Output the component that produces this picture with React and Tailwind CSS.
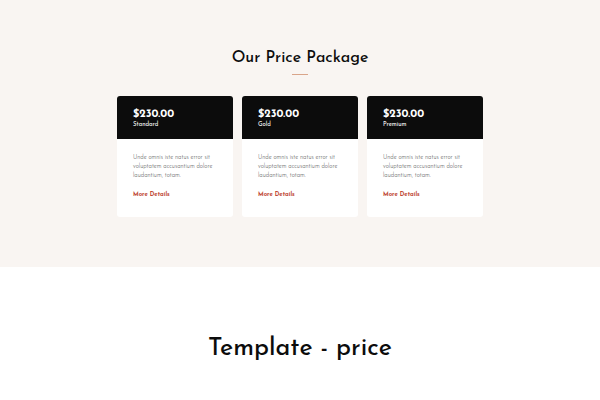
const plans = ["Standard", "Gold", "Premium"];

function PriceCard({ name }) {
  return (
    <article className="flex-1 overflow-hidden rounded-[3px] bg-white">
      <header className="bg-[#0c0c0c] px-4 pt-3 pb-2.5 text-white">
        <p className="text-[11px] leading-[13px] font-bold">$230.00</p>
        <h2 className="text-[6px] leading-2">{name}</h2>
      </header>
      <div className="px-4 pt-3.5 pb-[18px]">
        <p className="text-[6px] leading-[9px] font-light whitespace-nowrap text-[#444]">
          Unde omnis iste natus error sit
          <br />
          voluptatem accusantium dolore
          <br />
          laudantium, totam.
        </p>
        <a href="#details" className="mt-[10px] block text-[6px] leading-[9px] font-bold text-[#c04a38]">
          More Details
        </a>
      </div>
    </article>
  );
}

export default function App() {
  return (
    <main className="min-h-screen bg-white font-['Josefin_Sans','Lato',sans-serif] text-[#0c0c0c]">
      <section className="bg-[#f9f5f2] px-4 pt-[46px] pb-[50px]">
        <h1 className="text-center text-base leading-6 font-medium">Our Price Package</h1>
        <hr className="mx-auto mt-1 w-4 border-[#d9a58a]" />
        <div className="mx-auto mt-[21px] flex max-w-[366px] gap-[9px]">
          {plans.map((name) => (
            <PriceCard key={name} name={name} />
          ))}
        </div>
      </section>
      <h2 className="pt-[66px] text-center text-[25px] leading-8 font-medium">Template - price</h2>
    </main>
  );
}
